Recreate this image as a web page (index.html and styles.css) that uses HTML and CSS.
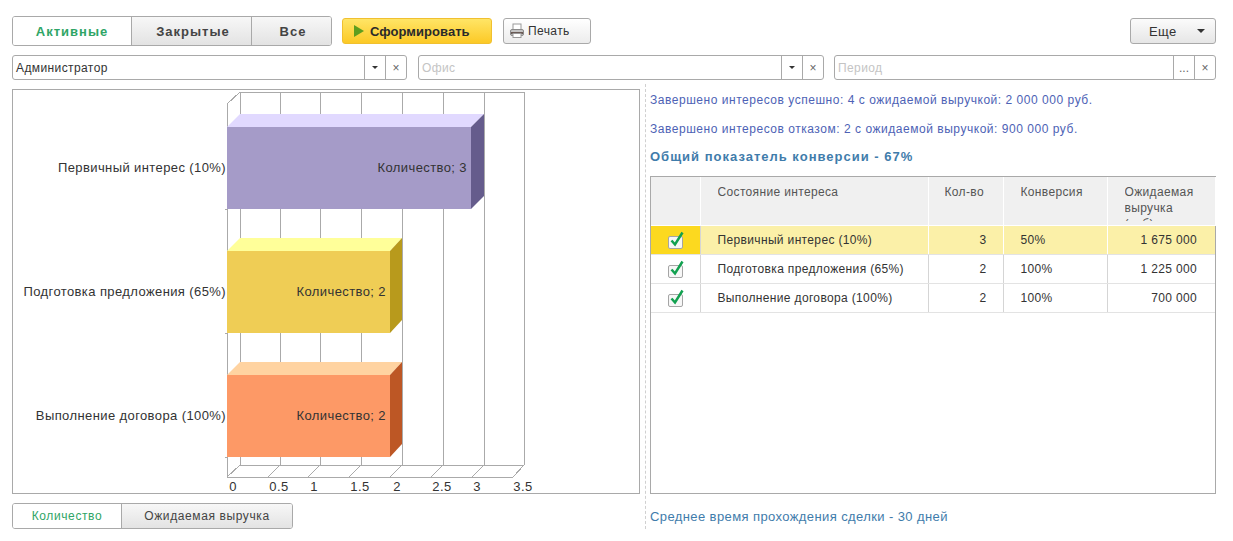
FILE: index.html
```html
<!DOCTYPE html>
<html lang="en">
<head>
    <meta charset="UTF-8">
    <title>Воронка</title>
    <link rel="stylesheet" href="styles.css">
</head>
<body>
    <div class="toolbar">
        <div class="tumbler tumbler-big">
            <div class="tumbler-item active w-119">Активные</div>
            <div class="tumbler-item w-120">Закрытые</div>
            <div class="tumbler-item w-81">Все</div>
        </div>
        <button class="btn btn-main">
            <svg width="10" height="12" viewBox="0 0 10 12"><path d="M0 0 L10 6 L0 12 Z" fill="#5f9e1e"/></svg>
            Сформировать
        </button>
        <button class="btn btn-print">
            <svg width="16" height="16" viewBox="0 0 16 16">
                <rect x="4" y="1" width="8" height="6" fill="#fff" stroke="#999"/>
                <rect x="1.5" y="6.5" width="13" height="6" rx="1.5" fill="#c4c4c4" stroke="#8a8a8a"/>
                <rect x="2" y="9" width="12" height="2" fill="#6a5a55"/>
                <rect x="4" y="10.5" width="8" height="4" fill="#fff" stroke="#999"/>
            </svg>
            Печать
        </button>
        <button class="btn btn-more">Еще <span class="arrow"></span></button>
    </div>

    <div class="filters">
        <div class="field f1">
            <span class="field-text">Администратор</span>
            <span class="field-btn"><span class="arrow small"></span></span>
            <span class="field-btn">×</span>
        </div>
        <div class="field f2">
            <span class="field-text empty">Офис</span>
            <span class="field-btn"><span class="arrow small"></span></span>
            <span class="field-btn">×</span>
        </div>
        <div class="field f3">
            <span class="field-text empty">Период</span>
            <span class="field-btn">...</span>
            <span class="field-btn">×</span>
        </div>
    </div>

    <div class="main">
        <div class="left">
            <div class="chart">
                <svg width="626" height="403" viewBox="13 90 626 403">
                    <g class="grid">
                        <path d="M240 92V465M280 92V465M320 92V465M361 92V465M402 92V465M443 92V465M484 92V465M524 92V465"/>
                        <path d="M240 92H524M240 465H524M227 477H513"/>
                        <path d="M227 104V477M227 104L240 92M225 209H227M225 333H227M225 457H227"/>
                        <path d="M227 477L240 465M268 477L280 465M308 477L320 465M349 477L361 465M390 477L402 465M431 477L443 465M472 477L484 465M513 477L524 465"/>
                    </g>

                    <polygon points="227,127 240,114 484,114 471,127" fill="#e1d9ff"/>
                    <polygon points="471,127 484,114 484,196 471,209" fill="#655c8c"/>
                    <rect x="227" y="127" width="244" height="82" fill="#a59bc8"/>

                    <polygon points="227,251 240,238 402,238 390,251" fill="#ffff99"/>
                    <polygon points="390,251 402,238 402,320 390,333" fill="#b89a1c"/>
                    <rect x="227" y="251" width="163" height="82" fill="#efcd55"/>

                    <polygon points="227,375 240,362 402,362 390,375" fill="#ffd3a1"/>
                    <polygon points="390,375 402,362 402,444 390,457" fill="#bd5725"/>
                    <rect x="227" y="375" width="163" height="82" fill="#fd9966"/>

                    <g class="chart-text">
                        <text x="226" y="172" text-anchor="end">Первичный интерес (10%)</text>
                        <text x="226" y="296" text-anchor="end">Подготовка предложения (65%)</text>
                        <text x="226" y="420" text-anchor="end">Выполнение договора (100%)</text>
                        <text x="467" y="172" text-anchor="end">Количество; 3</text>
                        <text x="386" y="296" text-anchor="end">Количество; 2</text>
                        <text x="386" y="420" text-anchor="end">Количество; 2</text>
                        <text x="233" y="491" text-anchor="middle">0</text>
                        <text x="279" y="491" text-anchor="middle">0.5</text>
                        <text x="314" y="491" text-anchor="middle">1</text>
                        <text x="360" y="491" text-anchor="middle">1.5</text>
                        <text x="397" y="491" text-anchor="middle">2</text>
                        <text x="442" y="491" text-anchor="middle">2.5</text>
                        <text x="477" y="491" text-anchor="middle">3</text>
                        <text x="523" y="491" text-anchor="middle">3.5</text>
                    </g>
                </svg>
            </div>
            <div class="tumbler tumbler-small">
                <div class="tumbler-item active w-109">Количество</div>
                <div class="tumbler-item w-171">Ожидаемая выручка</div>
            </div>
        </div>

        <div class="splitter"></div>

        <div class="right">
            <div class="info">Завершено интересов успешно: 4 с ожидаемой выручкой: 2 000 000 руб.</div>
            <div class="info">Завершено интересов отказом: 2 с ожидаемой выручкой: 900 000 руб.</div>
            <div class="info total">Общий показатель конверсии - 67%</div>
            <div class="table-box">
                <table class="report">
                    <colgroup>
                        <col class="c-check"><col class="c-name"><col class="c-qty"><col class="c-conv"><col class="c-sum">
                    </colgroup>
                    <thead>
                        <tr>
                            <th></th>
                            <th><div class="clip">Состояние интереса</div></th>
                            <th class="th-qty"><div class="clip">Кол-во</div></th>
                            <th><div class="clip">Конверсия</div></th>
                            <th><div class="clip">Ожидаемая<br>выручка<br>(руб)</div></th>
                        </tr>
                    </thead>
                    <tbody>
                        <tr class="selected">
                            <td class="check"><svg class="tick" width="18" height="18" viewBox="0 0 18 18"><rect x="1.5" y="5.5" width="14" height="12" rx="1.5" fill="#f7f7f7" stroke="#a5a5a5"/><path d="M4.5 9.5L8 13.5L15.5 1.5" fill="none" stroke="#12a150" stroke-width="2.5"/></svg></td>
                            <td>Первичный интерес (10%)</td>
                            <td class="num qty">3</td>
                            <td>50%</td>
                            <td class="num">1 675 000</td>
                        </tr>
                        <tr>
                            <td class="check"><svg class="tick" width="18" height="18" viewBox="0 0 18 18"><rect x="1.5" y="5.5" width="14" height="12" rx="1.5" fill="#f7f7f7" stroke="#a5a5a5"/><path d="M4.5 9.5L8 13.5L15.5 1.5" fill="none" stroke="#12a150" stroke-width="2.5"/></svg></td>
                            <td>Подготовка предложения (65%)</td>
                            <td class="num qty">2</td>
                            <td>100%</td>
                            <td class="num">1 225 000</td>
                        </tr>
                        <tr>
                            <td class="check"><svg class="tick" width="18" height="18" viewBox="0 0 18 18"><rect x="1.5" y="5.5" width="14" height="12" rx="1.5" fill="#f7f7f7" stroke="#a5a5a5"/><path d="M4.5 9.5L8 13.5L15.5 1.5" fill="none" stroke="#12a150" stroke-width="2.5"/></svg></td>
                            <td>Выполнение договора (100%)</td>
                            <td class="num qty">2</td>
                            <td>100%</td>
                            <td class="num">700 000</td>
                        </tr>
                    </tbody>
                </table>
            </div>
            <div class="info avg">Среднее время прохождения сделки - 30 дней</div>
        </div>
    </div>
</body>
</html>
```

FILE: styles.css
```css
body {
    margin: 0;
    padding: 16px 17px 0 12px;
    font-family: "Liberation Sans", Arial, sans-serif;
    font-size: 12px;
    color: #333;
    background-color: #fff;
    overflow: hidden;
}
.toolbar {
    display: flex;
    align-items: center;
    height: 30px;
}
.tumbler {
    display: flex;
    box-sizing: border-box;
    border: 1px solid #a9a9a9;
    border-radius: 3px;
    overflow: hidden;
}
.tumbler-big {
    height: 30px;
    font-size: 13px;
    font-weight: bold;
    letter-spacing: 1px;
}
.tumbler-big .tumbler-item:not(.active) {
    padding-left: 3px;
}
.tumbler-small {
    height: 26px;
    margin-top: 9px;
    width: 281px;
    letter-spacing: 0.6px;
}
.tumbler-item {
    display: flex;
    box-sizing: border-box;
    align-items: center;
    justify-content: center;
    background: linear-gradient(#f7f7f7, #e3e3e3);
    border-left: 1px solid #a9a9a9;
    color: #444;
}
.tumbler-item.active {
    background: #fff;
    border-left: none;
    color: #2fa566;
}
.w-119 { width: 118px; }
.w-120 { width: 120px; }
.w-81 { width: 80px; }
.w-109 { width: 108px; }
.w-171 { width: 171px; }
.btn {
    display: flex;
    align-items: center;
    box-sizing: border-box;
    height: 26px;
    padding: 0;
    border: 1px solid #a9a9a9;
    border-radius: 3px;
    background: linear-gradient(#fbfbfb, #e6e6e6);
    font-family: inherit;
    font-size: 12px;
    color: #333;
    letter-spacing: 0.4px;
}
.btn-main {
    width: 150px;
    margin-left: 10px;
    padding-left: 11px;
    gap: 6px;
    border-color: #f0c030;
    background: linear-gradient(#ffe566, #fcc926);
    font-size: 13px;
    font-weight: bold;
    color: #2a2a2a;
    letter-spacing: 0.05px;
}
.btn-print {
    width: 88px;
    margin-left: 11px;
    padding-left: 5px;
    gap: 3px;
    background: linear-gradient(#fff, #ececec);
}
.btn-more {
    width: 86px;
    margin-left: auto;
    padding-left: 18px;
    font-size: 13px;
}
.arrow {
    display: inline-block;
    width: 0;
    height: 0;
    border-left: 4px solid transparent;
    border-right: 4px solid transparent;
    border-top: 4px solid #333;
}
.btn-more .arrow {
    margin-left: 20px;
}
.arrow.small {
    border-left-width: 3px;
    border-right-width: 3px;
    border-top-width: 3px;
}
.filters {
    display: flex;
    margin-top: 9px;
    height: 25px;
}
.field {
    display: flex;
    box-sizing: border-box;
    border: 1px solid #a9a9a9;
    border-radius: 3px;
    height: 25px;
}
.f1 { width: 395px; }
.f2 { width: 406px; margin-left: 11px; }
.f3 { width: 382px; margin-left: 10px; }
.field-text {
    flex: 1;
    padding-left: 3px;
    line-height: 24px;
    letter-spacing: 0.4px;
}
.field-text.empty {
    color: #c4c4c4;
}
.field-btn {
    display: flex;
    align-items: center;
    justify-content: center;
    width: 20px;
    border-left: 1px solid #a9a9a9;
    color: #666;
    font-size: 12px;
}
.main {
    display: flex;
    margin-top: 4px;
}
.left {
    width: 628px;
    margin-top: 5px;
}
.chart {
    box-sizing: border-box;
    width: 628px;
    height: 405px;
    border: 1px solid #a9a9a9;
}
.chart svg {
    display: block;
}
.grid path {
    fill: none;
    stroke: #aaa;
    stroke-width: 1;
    shape-rendering: crispEdges;
}
.chart-text text {
    font-family: "Liberation Sans", Arial, sans-serif;
    font-size: 13px;
    letter-spacing: 0.4px;
    fill: #333;
}
.splitter {
    width: 0;
    height: 445px;
    margin-left: 5px;
    border-left: 1px dashed #d0d0d0;
}
.right {
    display: flex;
    flex-direction: column;
    width: 566px;
    margin-left: 4px;
}
.info {
    height: 28px;
    line-height: 30px;
    color: #4d62b5;
    letter-spacing: 0.53px;
    white-space: nowrap;
    margin-top: 1px;
}
.info.total {
    height: 29px;
    margin-top: 0;
    font-size: 13px;
    font-weight: bold;
    letter-spacing: 1px;
    color: #3f7cab;
}
.table-box {
    box-sizing: border-box;
    height: 318px;
    margin-top: 5px;
    border: 1px solid #a9a9a9;
}
.report {
    width: 564px;
    table-layout: fixed;
    border-collapse: collapse;
    letter-spacing: 0.35px;
}
.c-check { width: 49px; }
.c-name { width: 228px; }
.c-qty { width: 75px; }
.c-conv { width: 104px; }
.c-sum { width: 108px; }
.report th {
    box-sizing: border-box;
    height: 48px;
    padding: 0 0 0 17px;
    vertical-align: top;
    text-align: left;
    font-weight: normal;
    color: #555;
    background: #f0f0f0;
    border-right: 1px solid #fff;
    border-bottom: 1px solid #fff;
    line-height: 16px;
}
.report th:first-child {
    padding: 0;
}
.report th.th-qty {
    padding-left: 16px;
}
/* the last header wraps past the row height, it is clipped like in the app */
.clip {
    height: 37px;
    margin-top: 7px;
    overflow: hidden;
}
.report td {
    box-sizing: border-box;
    height: 29px;
    padding: 0 0 0 17px;
    border-right: 1px solid #d5d5d5;
    border-bottom: 1px solid #e3e3e3;
}
.report td:last-child {
    border-right: none;
}
.report td.num {
    padding: 0 18px 0 0;
    text-align: right;
}
.report td.qty {
    padding-right: 16px;
}
.report td.check {
    padding: 0;
}
.tick {
    display: block;
    margin: 0 0 0 16px;
}
.selected td {
    background: #fbf0a8;
    border-right-color: #fff;
}
.selected td.check {
    background: #fcd91f;
    border-right-color: #d5d5d5;
}
.info.avg {
    margin-top: 9px;
    font-size: 13px;
    letter-spacing: 0.4px;
    color: #3f7cab;
    height: 26px;
    line-height: 28px;
}
```
